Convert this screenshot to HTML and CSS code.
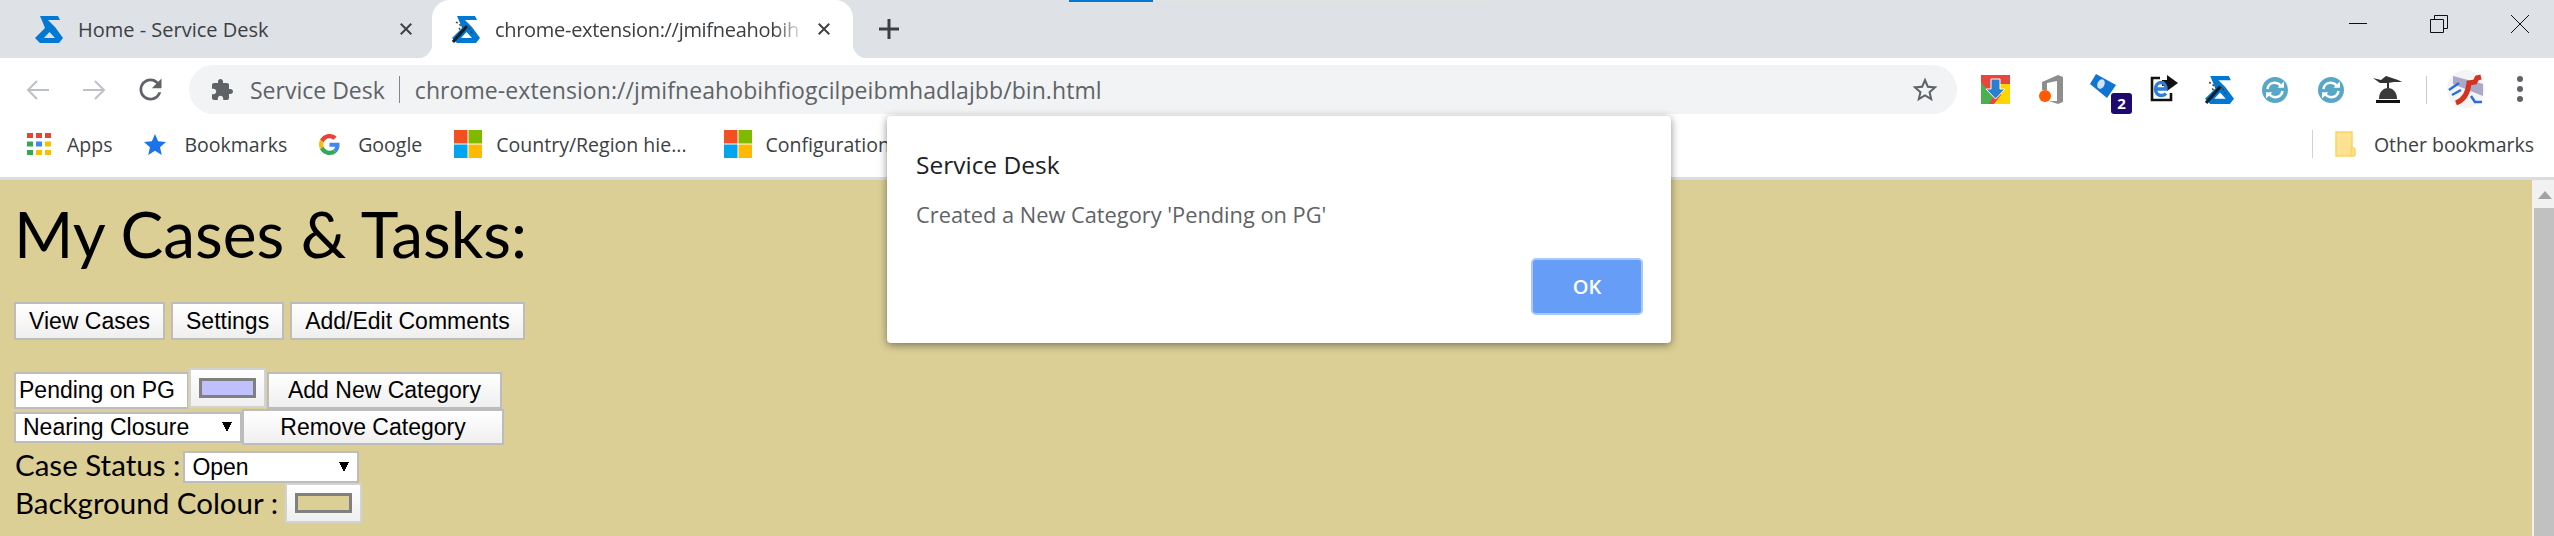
FILE: index.html
```html
<!DOCTYPE html>
<html lang="en">
<head>
    <meta charset="UTF-8">
    <meta name="viewport" content="width=device-width, initial-scale=1.0">
    <title>chrome-extension://jmifneahobihfiogcilpeibmhadlajbb</title>
    <link rel="stylesheet" href="styles.css">
</head>
<body>
    <svg class="defs" width="0" height="0">
        <symbol id="sd-logo" viewBox="0 0 28 28">
            <path fill="#0078d4" fill-rule="evenodd" d="M5 1H23L25 5H13L20 12L28 23L24 28H5L0 23L10 13L8 8ZM9 23H20L14.5 17Z"/>
        </symbol>
        <symbol id="wand" viewBox="0 0 28 28">
            <use href="#sd-logo"/>
            <path stroke="#15202b" stroke-width="3" d="M1 27L15 11"/>
            <path stroke="#444" stroke-width="1.5" stroke-dasharray="2 2" d="M4 7L11 12M17 13L21 20M7 13L9 16"/>
        </symbol>
        <symbol id="ms-logo" viewBox="0 0 28 28">
            <rect width="13.5" height="13.5" fill="#f25022"/>
            <rect x="14.5" width="13.5" height="13.5" fill="#7fba00"/>
            <rect y="14.5" width="13.5" height="13.5" fill="#00a4ef"/>
            <rect x="14.5" y="14.5" width="13.5" height="13.5" fill="#ffb900"/>
        </symbol>
        <symbol id="sync" viewBox="0 0 26 26">
            <circle cx="13" cy="13" r="13" fill="#57a7c6"/>
            <path fill="none" stroke="#fff" stroke-width="2.6" d="M5.5 12C6 8 9 5.8 12.500 5.800C15 5.800 17 6.800 18.500 8.500"/>
            <path fill="#fff" d="M15.500 10.800H22V4.500Z"/>
            <path fill="none" stroke="#fff" stroke-width="2.6" d="M20.500 14C20 18 17 20.200 13.500 20.200C11 20.200 9 19.200 7.500 17.500"/>
            <path fill="#fff" d="M10.500 15.200H4V21.500Z"/>
        </symbol>
    </svg>

    <div class="tabstrip">
        <div class="tab">
            <svg class="favicon"><use href="#sd-logo"/></svg>
            <span class="tab-title">Home - Service Desk</span>
            <svg class="tab-close" viewBox="0 0 16 16"><path d="M2 2L14 14M14 2L2 14"/></svg>
        </div>
        <div class="tab tab-active">
            <svg class="favicon"><use href="#wand"/></svg>
            <span class="tab-title">chrome-extension://jmifneahobih</span>
            <svg class="tab-close" viewBox="0 0 16 16"><path d="M2 2L14 14M14 2L2 14"/></svg>
        </div>
        <svg class="new-tab" viewBox="0 0 22 22"><path d="M11 1V21M1 11H21"/></svg>
        <div class="window-controls">
            <svg viewBox="0 0 18 18"><path d="M0 8.500H18"/></svg>
            <svg viewBox="0 0 18 18"><path d="M.5 4.500H13.500V17.500H.5ZM4.500 4.500V.5H17.500V13.500H13.500"/></svg>
            <svg viewBox="0 0 18 18"><path d="M0 0L18 18M18 0L0 18"/></svg>
        </div>
    </div>
    <div class="load-track"><div class="load-bar"></div></div>

    <div class="toolbar">
        <div class="tool">
            <svg class="nav-arrow" viewBox="0 0 24 20"><path d="M23 10H2M11 1L2 10L11 19"/></svg>
        </div>
        <div class="tool">
            <svg class="nav-arrow" viewBox="0 0 24 20"><path d="M1 10H22M13 1L22 10L13 19"/></svg>
        </div>
        <div class="tool">
            <svg class="reload" viewBox="0 0 24 24"><path d="M17.65 6.350C16.200 4.900 14.210 4 12 4c-4.420 0-7.990 3.580-7.990 8s3.570 8 7.990 8c3.730 0 6.840-2.550 7.730-6h-2.080c-.82 2.330-3.040 4-5.650 4-3.310 0-6-2.690-6-6s2.690-6 6-6c1.660 0 3.140.69 4.220 1.780L13 11h7V4l-2.350 2.350z"/></svg>
        </div>
        <div class="omnibox">
            <svg class="puzzle" viewBox="0 0 24 24"><path d="M20.500 11H19V7c0-1.100-.9-2-2-2h-4V3.500C13 2.120 11.880 1 10.500 1S8 2.120 8 3.500V5H4c-1.100 0-1.990.9-1.990 2v3.800H3.500c1.490 0 2.700 1.210 2.700 2.700s-1.210 2.700-2.700 2.700H2V20c0 1.100.9 2 2 2h3.800v-1.500c0-1.490 1.210-2.700 2.700-2.700 1.490 0 2.700 1.210 2.700 2.700V22H17c1.100 0 2-.9 2-2v-4h1.500c1.380 0 2.500-1.120 2.500-2.500S21.880 11 20.500 11z"/></svg>
            <span class="site-name">Service Desk</span>
            <span class="omni-sep"></span>
            <span class="url">chrome-extension://jmifneahobihfiogcilpeibmhadlajbb/bin.html</span>
            <svg class="star-outline" viewBox="0 0 24 24"><path d="M22 9.240l-7.190-.62L12 2 9.190 8.630 2 9.240l5.460 4.730L5.820 21 12 17.270 18.180 21l-1.630-7.030L22 9.240zM12 15.400l-3.760 2.270 1-4.280-3.320-2.880 4.380-.38L12 6.100l1.710 4.040 4.380.38-3.320 2.880 1 4.280L12 15.400z"/></svg>
        </div>
        <div class="extensions">
            <div class="ext">
                <svg class="ext-square" viewBox="0 0 29 29">
                    <rect width="29" height="29" fill="#e8453c"/>
                    <path fill="#4caf50" d="M0 7L12 22L8 29H0Z"/>
                    <path fill="#ffd600" d="M29 9H16L20 20L13 29H29Z"/>
                    <path fill="#2a7fd0" stroke="#fff" d="M10 4H19V14H24L14.500 24L5 14H10Z"/>
                </svg>
            </div>
            <div class="ext">
                <svg class="ext-square" viewBox="0 0 29 29">
                    <path fill="#8e8e8e" d="M5 7L21 0L26 2V27L21 29L12 26H20V6L10 8V15H5Z"/>
                    <circle cx="8" cy="21" r="6" fill="#ff5a00"/>
                </svg>
            </div>
            <div class="ext ext-badged">
                <svg class="ext-ticket" viewBox="0 0 26 24">
                    <path fill="#1173d4" d="M6 0L26 11L17 24L0 10Z"/>
                    <ellipse cx="11" cy="10" rx="3.500" ry="5" fill="#cfe6fa" transform="rotate(25 11 10)"/>
                </svg>
                <span class="badge">2</span>
            </div>
            <div class="ext">
                <svg class="ext-square" viewBox="0 0 29 29">
                    <path fill="none" stroke="#111" stroke-width="2.600" d="M11 3H3V25H22V18"/>
                    <path fill="#111" d="M18 0L29 8L18 16V11H13V5H18Z"/>
                    <path fill="none" stroke="#2e7fd3" stroke-width="3.400" d="M7 14H17C17 10 15 7.500 12 7.500C8.500 7.500 6.500 10.500 6.500 14C6.500 18 9 20.500 12.500 20.500C14.500 20.500 16 19.800 17 18.500"/>
                </svg>
            </div>
            <div class="ext"><svg class="ext-square"><use href="#wand"/></svg></div>
            <div class="ext"><svg class="ext-round"><use href="#sync"/></svg></div>
            <div class="ext"><svg class="ext-round"><use href="#sync"/></svg></div>
            <div class="ext">
                <svg class="ext-square" viewBox="0 0 29 29">
                    <path fill="#333" d="M0 3L8 5L13 1L25 5L29 7L21 7L15 8H7Z"/>
                    <path stroke="#333" stroke-width="2" d="M15 8V13"/>
                    <path fill="#3a3a3a" d="M6 24C6 17 10 13 15 13C20 13 24 17 24 24Z"/>
                    <rect x="3" y="25" width="24" height="3" fill="#111"/>
                </svg>
            </div>
        </div>
        <span class="toolbar-sep"></span>
        <svg class="avatar" viewBox="0 0 38 38">
            <circle cx="19" cy="19" r="19" fill="#f4f4f4"/>
            <path fill="#a9a9c9" d="M6 6L36 14V26L6 14Z"/>
            <path fill="none" stroke="#2a6fe0" stroke-width="2.500" d="M2 20L12 13M5 25L14 20M24 26L28 32H35"/>
            <path fill="none" stroke="#d3331f" stroke-width="5" d="M9 33C17 30 21 24 22 13L28 12L30 8L34 7"/>
        </svg>
        <div class="menu-dots"><span></span><span></span><span></span></div>
    </div>

    <div class="bookmarks">
        <div class="bookmark">
            <svg class="bm-apps" viewBox="0 0 24 22">
                <rect width="6" height="5" fill="#ea4335"/><rect x="9" width="6" height="5" fill="#ea4335"/><rect x="18" width="6" height="5" fill="#ea4335"/>
                <rect y="8.500" width="6" height="5" fill="#34a853"/><rect x="9" y="8.500" width="6" height="5" fill="#4285f4"/><rect x="18" y="8.500" width="6" height="5" fill="#fbbc05"/>
                <rect y="17" width="6" height="5" fill="#34a853"/><rect x="9" y="17" width="6" height="5" fill="#fbbc05"/><rect x="18" y="17" width="6" height="5" fill="#fbbc05"/>
            </svg>
            <span>Apps</span>
        </div>
        <div class="bookmark">
            <svg class="bm-star" viewBox="2 2 20 19"><path d="M12 17.270L18.180 21l-1.640-7.030L22 9.240l-7.190-.61L12 2 9.190 8.630 2 9.240l5.460 4.730L5.820 21z"/></svg>
            <span>Bookmarks</span>
        </div>
        <div class="bookmark">
            <svg class="bm-google" viewBox="0 0 48 48">
                <path fill="#EA4335" d="M24 9.500c3.540 0 6.710 1.220 9.210 3.600l6.850-6.850C35.900 2.380 30.470 0 24 0 14.620 0 6.510 5.380 2.560 13.220l7.980 6.190C12.430 13.720 17.740 9.500 24 9.500z"/>
                <path fill="#4285F4" d="M46.980 24.550c0-1.570-.15-3.090-.38-4.550H24v9.020h12.940c-.58 2.960-2.260 5.480-4.780 7.180l7.730 6c4.510-4.180 7.090-10.360 7.090-17.650z"/>
                <path fill="#FBBC05" d="M10.530 28.590c-.48-1.450-.76-2.990-.76-4.590s.27-3.140.76-4.590l-7.980-6.190C.92 16.460 0 20.120 0 24c0 3.880.92 7.540 2.560 10.780l7.970-6.190z"/>
                <path fill="#34A853" d="M24 48c6.480 0 11.930-2.130 15.890-5.810l-7.730-6c-2.150 1.450-4.920 2.300-8.160 2.300-6.260 0-11.570-4.220-13.470-9.910l-7.980 6.190C6.510 42.620 14.620 48 24 48z"/>
            </svg>
            <span>Google</span>
        </div>
        <div class="bookmark bookmark-country">
            <svg class="bm-ms"><use href="#ms-logo"/></svg>
            <span>Country/Region hie...</span>
        </div>
        <div class="bookmark">
            <svg class="bm-ms"><use href="#ms-logo"/></svg>
            <span>Configuration</span>
        </div>
        <div class="bookmark bookmark-other">
            <svg class="bm-folder" viewBox="0 0 21 26">
                <path fill="#fde293" stroke="#fbd35f" stroke-width="1.500" d="M1 1H17V25H1Z"/>
                <rect x="16" y="17" width="4" height="8" rx="1.500" fill="#fde293" stroke="#fbd35f" stroke-width="1.500"/>
            </svg>
            <span>Other bookmarks</span>
        </div>
    </div>

    <div class="viewport">
        <main class="page">
            <h1>My Cases &amp; Tasks:</h1>
            <div class="nav-buttons">
                <button class="btn">View Cases</button>
                <button class="btn">Settings</button>
                <button class="btn">Add/Edit Comments</button>
            </div>
            <div class="row row-add">
                <input class="cat-name" type="text" value="Pending on PG">
                <input class="colour" type="color" value="#c0c0ff">
                <button class="btn btn-add">Add New Category</button>
            </div>
            <div class="row row-remove">
                <select class="dropdown cat-select"><option>Nearing Closure</option></select>
                <button class="btn btn-remove">Remove Category</button>
            </div>
            <div class="row row-status">
                <label for="status">Case Status :</label>
                <select class="dropdown status-select" id="status"><option>Open</option></select>
            </div>
            <div class="row row-colour">
                <label for="bg-colour">Background Colour :</label>
                <input class="colour" id="bg-colour" type="color" value="#dbcf96">
            </div>
        </main>
        <div class="scrollbar">
            <span class="scroll-up"></span>
            <span class="scroll-thumb"></span>
        </div>
    </div>

    <div class="dialog">
        <div class="dialog-title">Service Desk</div>
        <div class="dialog-message">Created a New Category 'Pending on PG'</div>
        <div class="dialog-actions"><button class="dialog-ok">OK</button></div>
    </div>
</body>
</html>
```

FILE: styles.css
```css
/* Reset and Basic Styles */
* {
    box-sizing: border-box;
    margin: 0;
    padding: 0;
}

html,
body {
    height: 100%;
}

body {
    display: flex;
    flex-direction: column;
    overflow: hidden;
    background: #fff;
    font-family: 'Open Sans', sans-serif;
    color: #3c4043;
}

.defs {
    position: absolute;
}

svg {
    display: block;
    flex: none;
}

/* Tab strip */
.tabstrip {
    display: flex;
    align-items: center;
    height: 58px;
    background: #dee1e6;
    flex: none;
}

.tab {
    display: flex;
    align-items: center;
    height: 58px;
    width: 432px;
    padding-left: 35px;
    font-size: 20px;
}

.favicon {
    width: 28px;
    height: 28px;
}

.tab-title {
    margin-left: 15px;
    width: 321px;
    white-space: nowrap;
}

.tab-close {
    width: 14px;
    height: 14px;
    fill: none;
    stroke: #3c4043;
    stroke-width: 2.2;
}

.tab-active {
    position: relative;
    width: 421px;
    padding-left: 20px;
    background: #fff;
    border-radius: 18px 18px 0 0;
}

.tab-active .tab-title {
    width: 310px;
    letter-spacing: -0.3px;
    -webkit-mask-image: linear-gradient(to right, #000 90%, transparent);
    mask-image: linear-gradient(to right, #000 90%, transparent);
}

.tab-active .tab-close {
    margin-left: 12px;
}

.tab-active::before,
.tab-active::after {
    content: "";
    position: absolute;
    bottom: 0;
    width: 14px;
    height: 14px;
}

.tab-active::before {
    left: -14px;
    background: radial-gradient(circle at 0 0, transparent 14px, #fff 14.500px);
}

.tab-active::after {
    right: -14px;
    background: radial-gradient(circle at 100% 0, transparent 14px, #fff 14.500px);
}

.new-tab {
    width: 22px;
    height: 22px;
    margin-left: 25px;
    fill: none;
    stroke: #3c4043;
    stroke-width: 3;
}

.window-controls {
    display: flex;
    gap: 63px;
    margin-left: auto;
    margin-right: 25px;
    margin-top: -10px;
}

.window-controls svg {
    width: 18px;
    height: 18px;
    fill: none;
    stroke: #111;
    stroke-width: 1;
}

/* page load progress along the top edge */
.load-track {
    position: absolute;
    top: 0;
    left: 1069px;
    width: 422px;
    height: 2px;
    background: #e2e2e2;
}

.load-bar {
    width: 84px;
    height: 2px;
    background: #0078d4;
}

/* Toolbar */
.toolbar {
    display: flex;
    align-items: flex-start;
    height: 56px;
    padding: 7px 0 0 10px;
    flex: none;
}

.tool {
    display: flex;
    align-items: center;
    justify-content: center;
    width: 56px;
    height: 49px;
}

.nav-arrow {
    width: 24px;
    height: 20px;
    fill: none;
    stroke: #bdc1c6;
    stroke-width: 2;
}

.reload {
    width: 33px;
    height: 33px;
    fill: #5f6368;
}

.omnibox {
    display: flex;
    align-items: center;
    width: 1768px;
    height: 49px;
    margin-left: 11px;
    padding-left: 21px;
    border-radius: 25px;
    background: #f1f3f4;
    font-size: 23px;
    color: #5f6368;
}

.puzzle {
    width: 24px;
    height: 24px;
    fill: #5f6368;
}

.site-name {
    margin-left: 16px;
}

.omni-sep {
    width: 1px;
    height: 27px;
    margin: 0 15px 0 14px;
    background: #80868b;
}

.url {
    letter-spacing: 0.08px;
}

.star-outline {
    width: 30px;
    height: 30px;
    margin-left: auto;
    margin-right: 17px;
    fill: #5f6368;
}

.extensions {
    display: flex;
    margin-left: 10px;
}

.ext {
    display: flex;
    align-items: center;
    justify-content: center;
    width: 56px;
    height: 49px;
    position: relative;
}

.ext-square {
    width: 29px;
    height: 29px;
}

.ext-round {
    width: 26px;
    height: 26px;
}

.ext-ticket {
    width: 26px;
    height: 24px;
    margin: -8px 8px 0 0;
}

.badge {
    position: absolute;
    left: 32px;
    top: 28px;
    width: 21px;
    height: 21px;
    border-radius: 3px;
    background: #1e0a6e;
    color: #fff;
    font-size: 15px;
    font-weight: 700;
    line-height: 21px;
    text-align: center;
}

.toolbar-sep {
    width: 1px;
    height: 28px;
    margin: 11px 0 0 11px;
    background: #c8cacd;
}

.avatar {
    width: 38px;
    height: 38px;
    margin: 5px 0 0 20px;
}

.menu-dots {
    display: flex;
    flex-direction: column;
    gap: 4px;
    margin: 11px 0 0 32px;
}

.menu-dots span {
    width: 6px;
    height: 6px;
    border-radius: 50%;
    background: #5f6368;
}

/* Bookmarks bar */
.bookmarks {
    display: flex;
    align-items: center;
    height: 66px;
    padding: 0 20px 3px 27px;
    border-bottom: 3px solid #dadce0;
    font-size: 19.500px;
    flex: none;
}

.bookmark {
    display: flex;
    align-items: center;
    margin-right: 32px;
    white-space: nowrap;
}

.bookmark-country {
    margin-right: 37px;
}

.bm-apps {
    width: 24px;
    height: 22px;
    margin-right: 16px;
}

.bm-star {
    width: 22px;
    height: 21px;
    margin-right: 18px;
    fill: #1a73e8;
}

.bm-google {
    width: 21px;
    height: 21px;
    margin-right: 18px;
}

.bm-ms {
    width: 28px;
    height: 28px;
    margin-right: 14px;
}

.bm-folder {
    width: 21px;
    height: 26px;
    margin-right: 18px;
}

.bookmark-other {
    margin: 0 0 0 auto;
    padding-left: 22px;
    border-left: 1px solid #d0d2d5;
    height: 28px;
}

/* Page content */
.viewport {
    display: flex;
    flex: 1;
    min-height: 0;
}

.page {
    flex: 1;
    padding: 16px 0 0 14px;
    background: #dbcf96;
    font-family: 'Lato', sans-serif;
    color: #000;
}

h1 {
    height: 76px;
    margin-bottom: 30px;
    font-size: 64px;
    font-weight: 400;
    line-height: 76px;
}

.btn {
    height: 38px;
    padding: 0 13px;
    border: 2px solid #bcbcbc;
    background: linear-gradient(to bottom, #fff, #efefef);
    font-family: 'Liberation Sans', sans-serif;
    font-size: 23px;
    color: #000;
}

.nav-buttons {
    display: flex;
    gap: 6px;
    margin-bottom: 28px;
}

.row {
    display: flex;
}

.row-add {
    height: 41px;
    align-items: flex-end;
}

.cat-name {
    width: 174px;
    height: 37px;
    padding-left: 3px;
    border: 2px solid #bcbcbc;
    border-right-width: 1px;
    background: #fff;
    font-family: 'Liberation Sans', sans-serif;
    font-size: 23px;
    color: #000;
}

.colour {
    width: 77px;
    height: 40px;
    margin: 0 1px 1px 1px;
    padding: 8px;
    border: 2px solid #d2d2d2;
    background: linear-gradient(to bottom, #fff, #efefef);
    appearance: none;
    -webkit-appearance: none;
}

.colour::-webkit-color-swatch-wrapper {
    padding: 0;
}

.colour::-webkit-color-swatch {
    border: 3px solid #808080;
    border-radius: 0;
}

.btn-add {
    width: 235px;
    height: 37px;
}

.row-remove {
    height: 36px;
    align-items: center;
}

.dropdown {
    height: 31px;
    padding-left: 7px;
    border: 2px solid #bcbcbc;
    background-color: #fff;
    background-image:
        linear-gradient(to top right, transparent 50%, #000 50%),
        linear-gradient(to top left, transparent 50%, #000 50%);
    background-size: 5px 10px, 5px 10px;
    background-repeat: no-repeat;
    font-family: 'Liberation Sans', sans-serif;
    font-size: 23px;
    color: #000;
    appearance: none;
    -webkit-appearance: none;
    border-radius: 0;
}

.cat-select {
    width: 228px;
    background-position: right 13px center, right 8px center;
}

.btn-remove {
    width: 262px;
    height: 36px;
}

.row-status {
    height: 38px;
    align-items: flex-end;
    gap: 3px;
}

.status-select {
    width: 176px;
    height: 32px;
    background-position: right 13px center, right 8px center;
}

.row-colour {
    height: 39px;
    align-items: center;
    gap: 7px;
}

label {
    padding-left: 1px;
    font-size: 29.500px;
    line-height: 36px;
}

.row-colour .colour {
    margin: 0;
}

.scrollbar {
    width: 22px;
    padding-top: 11px;
    background: #f1f1f1;
    display: flex;
    flex-direction: column;
    align-items: flex-end;
}

.scroll-up {
    width: 0;
    height: 0;
    margin-right: 2px;
    border-left: 7px solid transparent;
    border-right: 7px solid transparent;
    border-bottom: 8px solid #a3a3a3;
}

.scroll-thumb {
    flex: 1;
    width: 20px;
    margin-top: 9px;
    background: #c1c1c1;
}

/* Alert dialog */
.dialog {
    position: absolute;
    top: 116px;
    left: 887px;
    width: 784px;
    height: 227px;
    padding: 33px 28px 0 29px;
    border-radius: 4px;
    background: #fff;
    box-shadow: 0 2px 8px rgba(0, 0, 0, 0.45);
}

.dialog-title {
    font-size: 24.500px;
    line-height: 32px;
    color: #202124;
}

.dialog-message {
    margin-top: 18px;
    font-size: 21.800px;
    line-height: 32px;
    color: #5f6368;
}

.dialog-actions {
    display: flex;
    justify-content: flex-end;
    margin-top: 27px;
}

.dialog-ok {
    width: 112px;
    height: 57px;
    border: 2px solid #a8c7fa;
    border-radius: 5px;
    background: #669df6;
    font-family: 'Open Sans', sans-serif;
    font-size: 20px;
    font-weight: 600;
    color: #fff;
}
```
